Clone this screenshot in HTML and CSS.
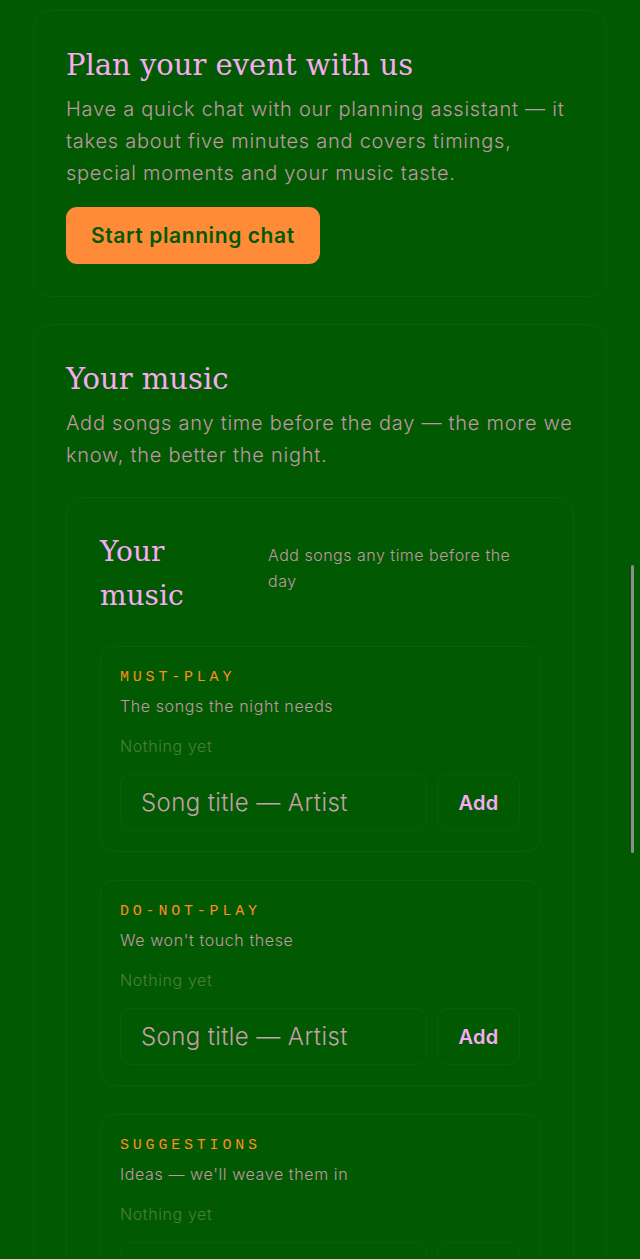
FILE: index.html
```html
<!DOCTYPE html>
<html lang="en">
<head>
<meta charset="utf-8">
<title>Plan your event</title>
<link rel="stylesheet" href="styles.css">
</head>
<body>
<main class="page">
  <section class="card">
    <h2 class="card-title">Plan your event with us</h2>
    <p class="card-text">Have a quick chat with our planning assistant — it takes about five minutes and covers timings, special moments and your music taste.</p>
    <button class="cta" type="button">Start planning chat</button>
  </section>

  <section class="card">
    <h2 class="card-title">Your music</h2>
    <p class="card-text">Add songs any time before the day — the more we know, the better the night.</p>

    <div class="music">
      <div class="music-head">
        <h3 class="music-title">Your music</h3>
        <p class="music-sub">Add songs any time before the day</p>
      </div>

      <div class="list">
        <div class="eyebrow">MUST-PLAY</div>
        <p class="list-desc">The songs the night needs</p>
        <p class="list-empty">Nothing yet</p>
        <form class="add-row">
          <input class="song-input" type="text" placeholder="Song title — Artist">
          <button class="add-btn" type="button">Add</button>
        </form>
      </div>

      <div class="list">
        <div class="eyebrow">DO-NOT-PLAY</div>
        <p class="list-desc">We won't touch these</p>
        <p class="list-empty">Nothing yet</p>
        <form class="add-row">
          <input class="song-input" type="text" placeholder="Song title — Artist">
          <button class="add-btn" type="button">Add</button>
        </form>
      </div>

      <div class="list">
        <div class="eyebrow">SUGGESTIONS</div>
        <p class="list-desc">Ideas — we'll weave them in</p>
        <p class="list-empty">Nothing yet</p>
        <form class="add-row">
          <input class="song-input" type="text" placeholder="Song title — Artist">
          <button class="add-btn" type="button">Add</button>
        </form>
      </div>
    </div>
  </section>
</main>
<div class="scroll-thumb"></div>
</body>
</html>
```

FILE: styles.css
```css
html {
  scrollbar-width: none;
}
html::-webkit-scrollbar {
  display: none;
}
body {
  margin: 0;
  background: #015a01;
  font-family: Inter, "Noto Sans", sans-serif;
  font-weight: 300;
  color: #c297a6;
}
.page {
  padding: 10px 33px 40px;
  display: flex;
  flex-direction: column;
  gap: 27px;
}
.card {
  border: 1px solid rgba(120, 200, 120, 0.07);
  border-radius: 18px;
  padding: 36px 32px 32px;
}
.card-title {
  margin: 0 0 10px;
  font-family: "DejaVu Serif", "Liberation Serif", serif;
  font-weight: 400;
  font-size: 29px;
  line-height: 36px;
  color: #fbaaf4;
}
.card-text {
  margin: 0;
  font-size: 20px;
  line-height: 32px;
  letter-spacing: 0.75px;
}
.cta {
  margin-top: 18px;
  background: #ff8a38;
  color: #015a01;
  border: none;
  border-radius: 11px;
  padding: 16px 25px;
  font-family: Inter, "Noto Sans", sans-serif;
  font-weight: 600;
  font-size: 21px;
  line-height: 25px;
  letter-spacing: 0.6px;
  cursor: pointer;
}
.music {
  margin-top: 26px;
  border: 1px solid rgba(120, 200, 120, 0.07);
  border-radius: 18px;
  padding: 32px 32px 32px 33px;
  display: flex;
  flex-direction: column;
  gap: 28px;
}
.music-head {
  display: flex;
  align-items: baseline;
  gap: 48px;
}
.music-title {
  flex: 0 0 120px;
  margin: 0;
  font-family: "DejaVu Serif", "Liberation Serif", serif;
  font-weight: 400;
  font-size: 28px;
  line-height: 44px;
  color: #fbaaf4;
}
.music-sub {
  margin: 0;
  width: 256px;
  font-size: 16px;
  line-height: 26px;
  letter-spacing: 0.5px;
}
.list {
  border: 1px solid rgba(120, 200, 120, 0.07);
  border-radius: 14px;
  padding: 21px 20px 20px 19px;
  width: 400px;
}
.eyebrow {
  font-family: "Liberation Mono", "DejaVu Sans Mono", monospace;
  font-size: 15px;
  line-height: 20px;
  letter-spacing: 3.8px;
  color: #ff8c1e;
}
.list-desc {
  margin: 5px 0 0;
  font-size: 16px;
  line-height: 26px;
  letter-spacing: 0.6px;
}
.list-empty {
  margin: 14px 0 0;
  font-size: 16px;
  line-height: 26px;
  letter-spacing: 0.6px;
  color: #4b7e3c;
}
.add-row {
  margin: 15px 0 0;
  display: flex;
  gap: 10px;
}
.song-input {
  flex: 1;
  min-width: 0;
  height: 57px;
  box-sizing: border-box;
  background: transparent;
  border: 1px solid rgba(120, 200, 120, 0.06);
  border-radius: 11px;
  padding: 0 20px;
  font-family: Inter, "Noto Sans", sans-serif;
  font-weight: 300;
  font-size: 24px;
  letter-spacing: 0.4px;
  color: #fbaaf4;
  outline: none;
}
.song-input::placeholder {
  color: #c6a0aa;
}
.add-btn {
  flex: 0 0 83px;
  height: 57px;
  background: transparent;
  border: 1px solid rgba(120, 200, 120, 0.06);
  border-radius: 11px;
  font-family: Inter, "Noto Sans", sans-serif;
  font-weight: 600;
  font-size: 20px;
  letter-spacing: 0.3px;
  color: #fbaaf4;
  cursor: pointer;
}
.scroll-thumb {
  position: fixed;
  right: 6px;
  top: 565px;
  width: 3px;
  height: 288px;
  border-radius: 2px;
  background: #8e8a92;
}
```
